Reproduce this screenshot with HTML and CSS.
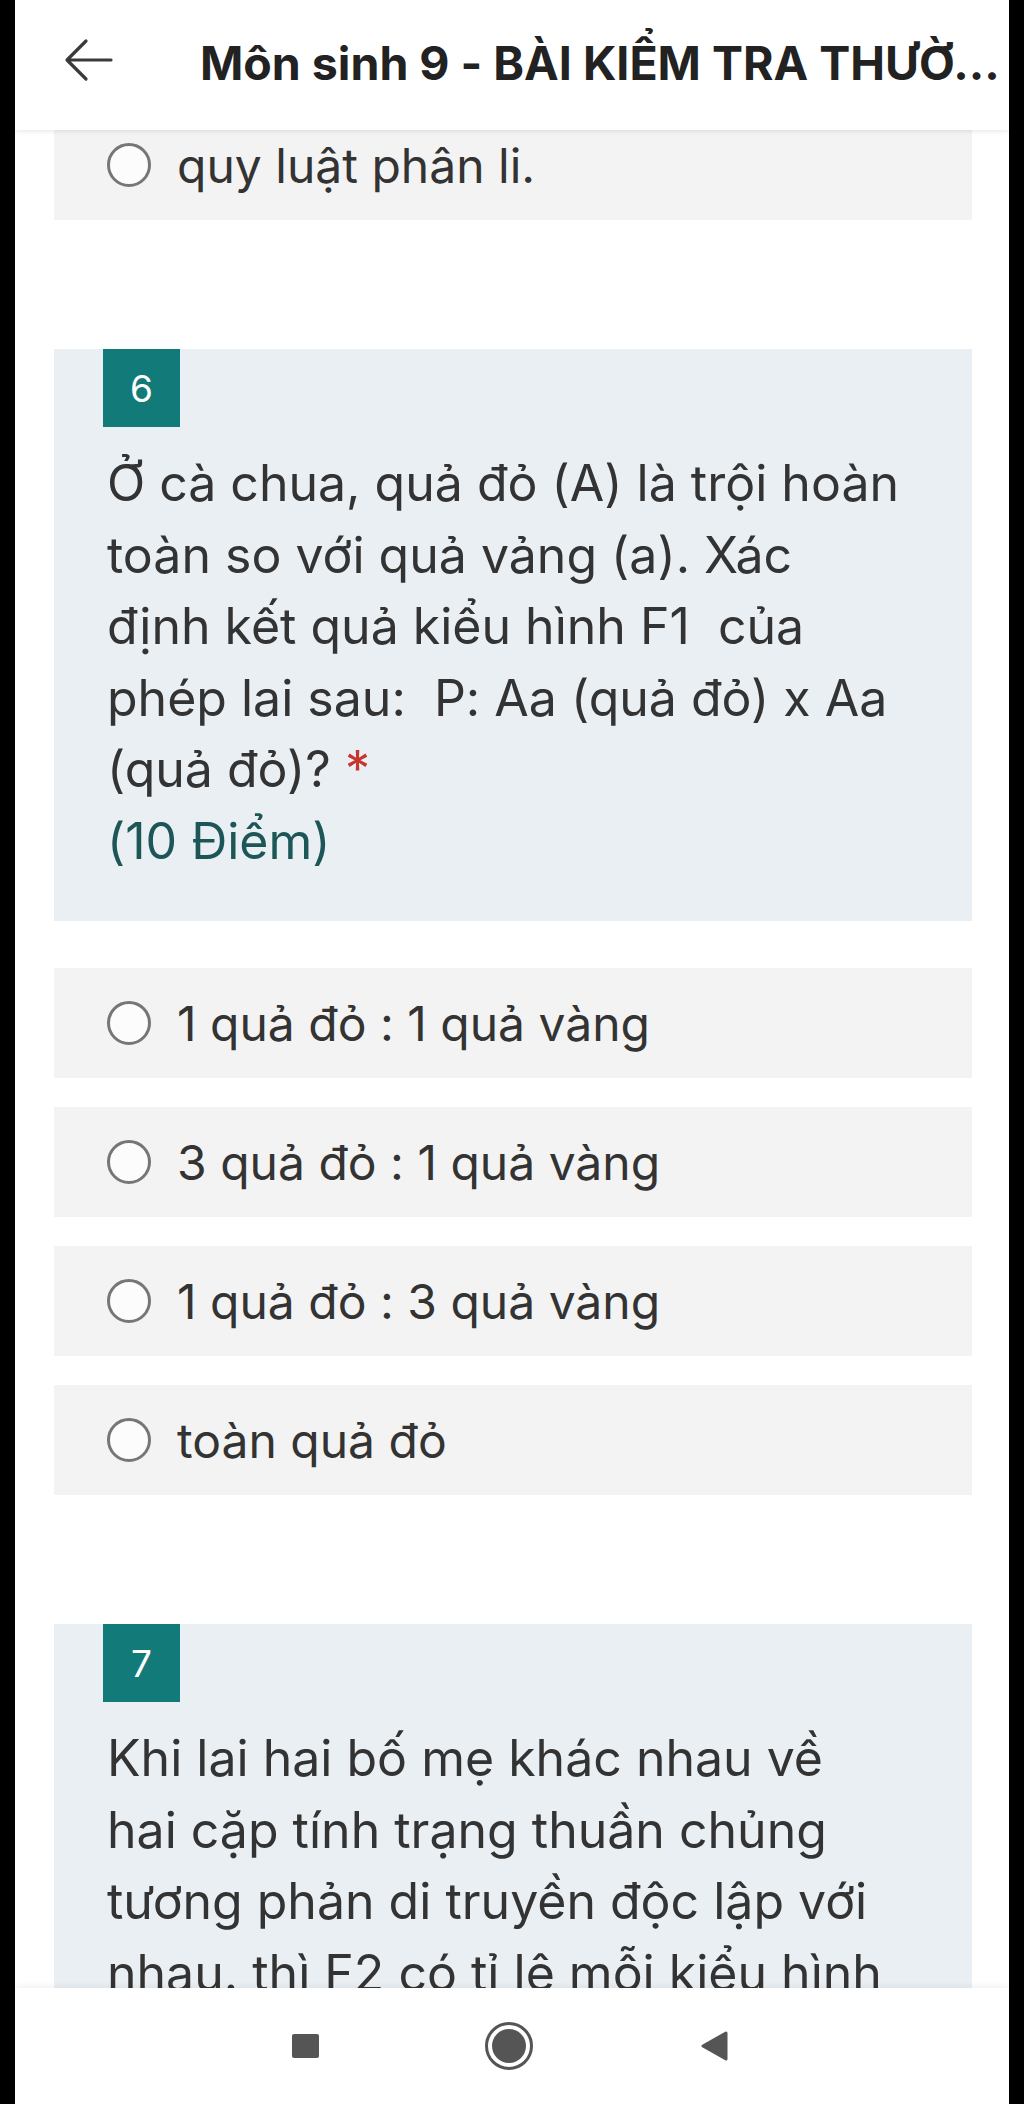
FILE: index.html
```html
<!DOCTYPE html>
<html lang="vi">
<head>
  <meta charset="UTF-8">
  <title>Môn sinh 9 - BÀI KIỂM TRA THƯỜNG XUYÊN</title>
  <link rel="stylesheet" href="styles.css">
</head>
<body>
  <div class="screen">
    <div class="topbar">
      <span class="back-btn">
        <svg width="50" height="44" viewBox="0 0 50 44">
          <path d="M48 22 H4 M23 3 L4 22 L23 41" fill="none" stroke="#3a3a3a" stroke-width="3.2" stroke-linecap="round" stroke-linejoin="round"/>
        </svg>
      </span>
      <h1 class="form-title">Môn sinh 9 - BÀI KIỂM TRA THƯỜ...</h1>
    </div>

    <div class="form-body">
      <div class="form-list">
        <label class="choice">
          <span class="radio"></span>
          <span>quy luật phân li.</span>
        </label>

        <div class="question">
          <div class="q-number">6</div>
          <p class="q-text">Ở cà chua, quả đỏ (A) là trội hoàn toàn so với quả vảng (a). Xác định kết quả kiểu hình F1&nbsp; của phép lai sau:&nbsp; P: Aa (quả đỏ) x Aa (quả đỏ)? <span class="required">*</span><br><span class="points">(10 Điểm)</span></p>
        </div>

        <div class="choices">
          <label class="choice">
            <span class="radio"></span>
            <span>1 quả đỏ : 1 quả vàng</span>
          </label>
          <label class="choice">
            <span class="radio"></span>
            <span>3 quả đỏ : 1 quả vàng</span>
          </label>
          <label class="choice">
            <span class="radio"></span>
            <span>1 quả đỏ : 3 quả vàng</span>
          </label>
          <label class="choice">
            <span class="radio"></span>
            <span>toàn quả đỏ</span>
          </label>
        </div>

        <div class="question">
          <div class="q-number">7</div>
          <p class="q-text">Khi lai hai bố mẹ khác nhau về hai cặp tính trạng thuần chủng tương phản di truyền độc lập với nhau. thì F2 có tỉ lệ mỗi kiểu hình bằng tích tỉ lệ của các tính trạng hợp thành nó.</p>
        </div>
      </div>
    </div>

    <div class="navbar">
      <span class="nav-recent"></span>
      <span class="nav-home"><span></span></span>
      <svg class="nav-back" width="28" height="30" viewBox="0 0 28 30">
        <path d="M26 2 L3 15 L26 28 Z" fill="#555" stroke="#555" stroke-width="3" stroke-linejoin="round"/>
      </svg>
    </div>
  </div>
</body>
</html>
```

FILE: styles.css
```css
* {
  box-sizing: border-box;
}

body {
  margin: 0;
  background: #000;
  font-family: Inter, Roboto, sans-serif;
  font-feature-settings: "calt" 0;
  color: #333;
}

.screen {
  margin: 0 15px;
  height: 2104px;
  background: #fff;
  display: flex;
  flex-direction: column;
  overflow: hidden;
}

.topbar {
  position: relative;
  z-index: 2;
  height: 130px;
  padding: 0 0 10px 48px;
  display: flex;
  align-items: center;
  background: #fff;
  box-shadow: 0 2px 4px rgba(0, 0, 0, 0.08);
}

.back-btn {
  display: flex;
  width: 50px;
  height: 44px;
  margin-right: 87px;
}

.form-title {
  margin: 6px 0 0;
  font-size: 46.5px;
  font-weight: 700;
  color: #222;
  white-space: nowrap;
}

.form-body {
  flex: 1;
  overflow: hidden;
  padding: 0 37px 0 39px;
}

.form-list {
  margin-top: -20px;
  display: flex;
  flex-direction: column;
  gap: 129px;
}

.choices {
  display: flex;
  flex-direction: column;
  gap: 29px;
  margin-top: -82px;
}

.choice {
  height: 110px;
  background: #f3f3f3;
  display: flex;
  align-items: center;
  padding-left: 53px;
  font-size: 48px;
  color: #333;
}

.radio {
  width: 44px;
  height: 44px;
  border: 3px solid #767676;
  border-radius: 50%;
  background: #fcfcfc;
  margin-right: 26px;
  flex-shrink: 0;
}

.question {
  background: #e9eff2;
  padding: 0 69px 44px 49px;
}

.q-number {
  width: 77px;
  height: 78px;
  background: #127a79;
  color: #fff;
  font-size: 37px;
  display: flex;
  align-items: center;
  justify-content: center;
}

.q-text {
  margin: 21px 0 0 4px;
  font-size: 50px;
  line-height: 71.5px;
  color: #333;
}

.required {
  color: #c8352e;
}

.points {
  color: #1d5656;
}

.navbar {
  position: relative;
  z-index: 2;
  height: 116px;
  flex-shrink: 0;
  background: #fff;
  box-shadow: 0 -2px 6px rgba(0, 0, 0, 0.06);
  display: flex;
  align-items: center;
}

.nav-recent {
  width: 27px;
  height: 24px;
  background: #555;
  border-radius: 2px;
  margin-left: 277px;
}

.nav-home {
  width: 48px;
  height: 48px;
  border: 3px solid #555;
  border-radius: 50%;
  margin-left: 166px;
  display: flex;
  align-items: center;
  justify-content: center;
}

.nav-home span {
  width: 34px;
  height: 34px;
  border-radius: 50%;
  background: #555;
}

.nav-back {
  margin-left: 167px;
}
```
